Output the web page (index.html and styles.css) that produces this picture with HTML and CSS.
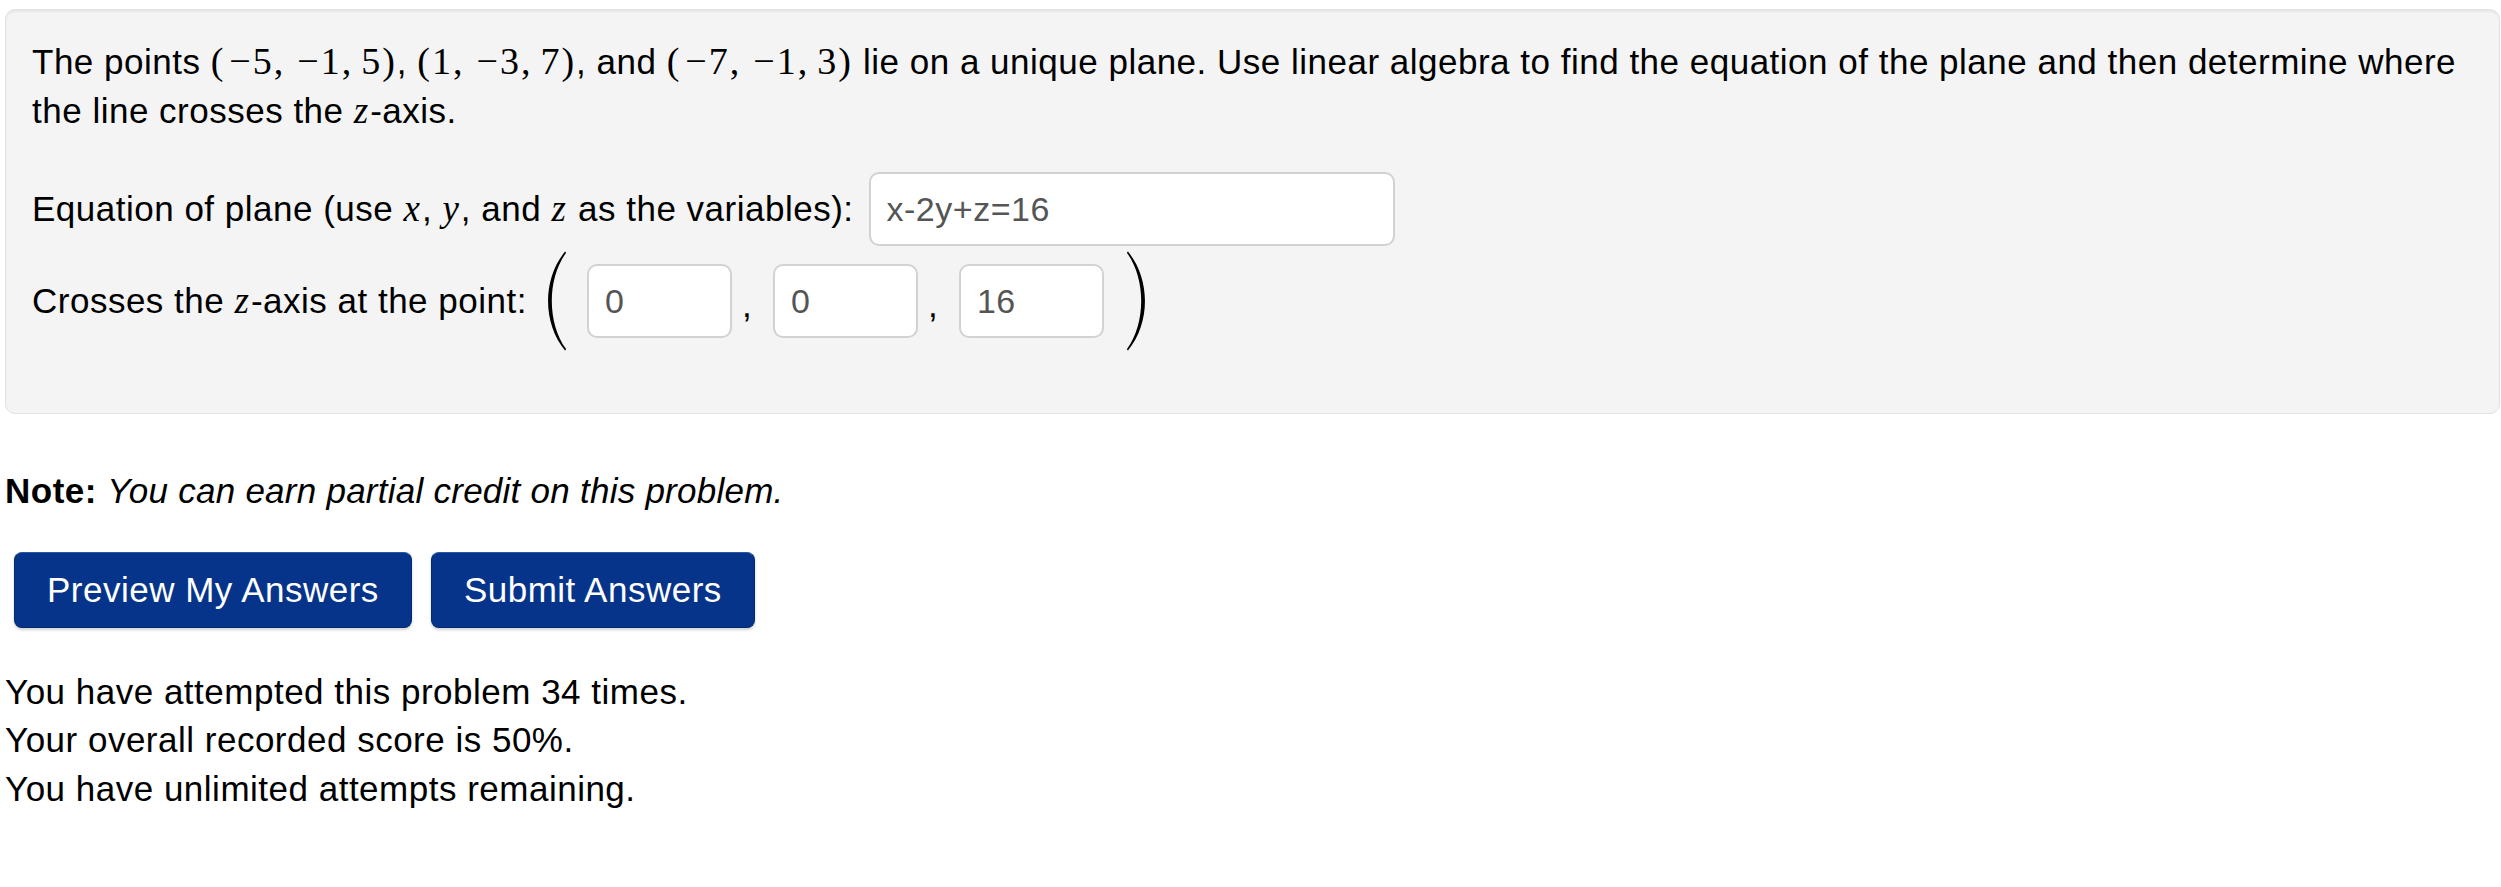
FILE: index.html
```html
<!DOCTYPE html>
<html lang="en">
<head>
<meta charset="utf-8">
<title>Problem</title>
<link rel="stylesheet" href="styles.css">
</head>
<body>
<div class="page">
  <div class="well">
    <p class="prompt">The points <span class="m">(<span class="op">−</span>5,<span class="th"></span><span class="op">−</span>1,<span class="th"></span>5)</span>, <span class="m">(1,<span class="th"></span><span class="op">−</span>3,<span class="th"></span>7)</span>, and <span class="m">(<span class="op">−</span>7,<span class="th"></span><span class="op">−</span>1,<span class="th"></span>3)</span> lie on a unique plane. Use linear algebra to find the equation of the plane and then determine where the line crosses the <i class="mv">z</i>-axis.</p>
    <div class="row eq-row">
      <span class="label">Equation of plane (use <i class="mv">x</i>, <i class="mv">y</i>, and <i class="mv">z</i> as the variables):</span>
      <input class="ans ans-wide" type="text" value="x-2y+z=16">
    </div>
    <div class="row pt-row">
      <span class="label">Crosses the <i class="mv">z</i>-axis at the point:</span>
      <svg class="paren" viewBox="0 0 20 100" width="20" height="100" aria-hidden="true"><path d="M19 0.6 C-3.6 28 -3.6 72 19 99.4 L20.2 98.4 C1 72 1 28 20.2 1.6 Z"/></svg>
      <input class="ans ans-small" type="text" value="0">
      <span class="comma">,</span>
      <input class="ans ans-small" type="text" value="0">
      <span class="comma">,</span>
      <input class="ans ans-small" type="text" value="16">
      <svg class="paren paren-right" viewBox="0 0 20 100" width="20" height="100" aria-hidden="true"><path d="M19 0.6 C-3.6 28 -3.6 72 19 99.4 L20.2 98.4 C1 72 1 28 20.2 1.6 Z"/></svg>
    </div>
  </div>
  <p class="note"><b>Note:</b> <i>You can earn partial credit on this problem.</i></p>
  <div class="buttons">
    <button class="btn" type="button">Preview My Answers</button>
    <button class="btn" type="button">Submit Answers</button>
  </div>
  <div class="attempts">
    <div>You have attempted this problem 34 times.</div>
    <div>Your overall recorded score is 50%.</div>
    <div>You have unlimited attempts remaining.</div>
  </div>
</div>
</body>
</html>
```
FILE: styles.css
```css
html, body {
  margin: 0;
  background: #ffffff;
}
body {
  font-family: "Liberation Sans", Arial, Helvetica, sans-serif;
  font-size: 35px;
  letter-spacing: 0.5px;
  line-height: 48.6px;
  color: #000000;
}
.page {
  padding: 9px 1px 0 5px;
}
.well {
  background: #f4f4f4;
  border: 1px solid #e2e2e2;
  border-radius: 10px;
  box-shadow: inset 0 2px 2px rgba(0, 0, 0, 0.05);
  padding: 27px 26px 62px 26px;
}
.prompt {
  margin: 0;
}
.m {
  font-family: "Liberation Serif", "Times New Roman", serif;
  font-size: 38px;
  letter-spacing: 2px;
}
.op {
  margin: 0 0 0 4px;
}
.th {
  display: inline-block;
  width: 8px;
}
.mv {
  font-family: "Liberation Serif", "Times New Roman", serif;
  font-style: italic;
  font-size: 37px;
  letter-spacing: 0;
  padding-right: 2px;
}
.row {
  display: flex;
  align-items: center;
}
.eq-row {
  margin-top: 37px;
}
.pt-row {
  margin-top: 5px;
}
.eq-row .label {
  margin-right: 15px;
}
.pt-row .label {
  margin-right: 19px;
}
.ans {
  box-sizing: border-box;
  height: 74px;
  font-family: "Liberation Sans", Arial, sans-serif;
  font-size: 34px;
  letter-spacing: 0.5px;
  color: #555555;
  background: #ffffff;
  border: 2px solid #d2d2d2;
  border-radius: 10px;
  padding: 0 16px;
  margin: 0;
  outline: none;
}
.ans-wide {
  width: 526px;
}
.ans-small {
  width: 145px;
}
.paren {
  display: block;
  fill: #000000;
  flex: none;
  margin-right: 21px;
}
.paren-right {
  transform: scaleX(-1);
  margin-left: 23px;
  margin-right: 0;
}
.comma {
  box-sizing: border-box;
  width: 41px;
  padding-left: 10px;
  line-height: 48.6px;
  margin-top: 8px;
}
.note {
  margin: 53px 0 0 0;
}
.note i {
  letter-spacing: 0.25px;
}
.buttons {
  display: flex;
  gap: 19px;
  margin-top: 36px;
  padding-left: 9px;
}
.btn {
  box-sizing: border-box;
  height: 76px;
  padding: 0 32px;
  font-family: "Liberation Sans", Arial, sans-serif;
  font-size: 35px;
  letter-spacing: 0.5px;
  color: #ffffff;
  background: #05348a;
  border: 1px solid #022a6e;
  border-top-color: #2a55a0;
  border-radius: 8px;
  box-shadow: 0 2px 3px rgba(0, 0, 0, 0.18);
  cursor: pointer;
}
.attempts {
  margin-top: 40px;
}
```
